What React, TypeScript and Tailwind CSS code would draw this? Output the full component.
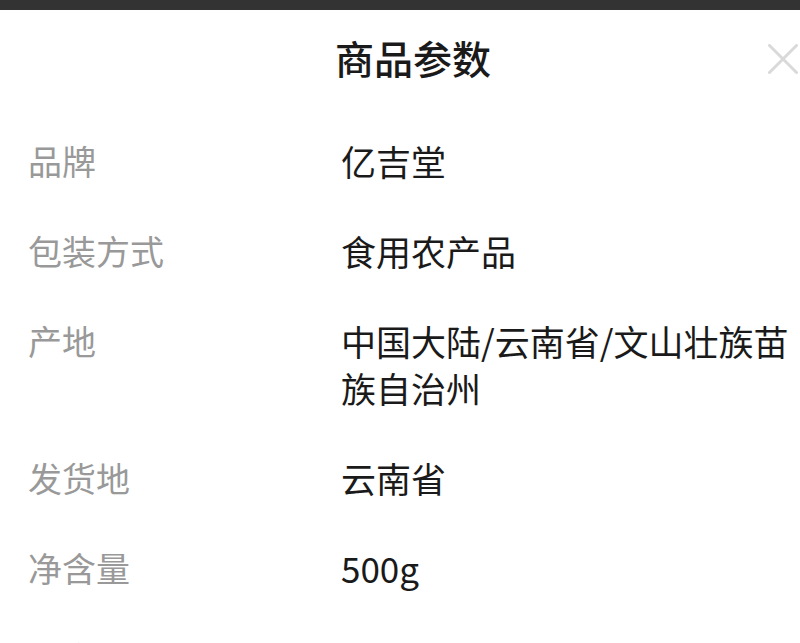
import React from 'react';

const params: { label: string; value: string }[] = [
  { label: '品牌', value: '亿吉堂' },
  { label: '包装方式', value: '食用农产品' },
  { label: '产地', value: '中国大陆/云南省/文山壮族苗族自治州' },
  { label: '发货地', value: '云南省' },
  { label: '净含量', value: '500g' },
  { label: '生产日期', value: '2023-01-01' },
];

export default function App() {
  return (
    <div
      className="w-[800px] h-[643px] overflow-hidden bg-white"
      style={{ fontFamily: '"Noto Sans CJK SC", "Noto Sans", sans-serif' }}
    >
      <div className="h-[10px] bg-[#333333]" />
      <header className="relative h-[100px] flex items-center justify-center pl-[26px] pb-[6px]">
        <h1 className="text-[39px] leading-[47px] font-medium text-[#1a1a1a]">商品参数</h1>
        <button className="absolute right-[2px] top-[34px] w-[30px] h-[30px] text-[#d9d9d9]">
          <svg viewBox="0 0 30 30" className="w-full h-full" fill="none" stroke="currentColor" strokeWidth={3} strokeLinecap="round">
            <path d="M1.5 1.5L28.5 28.5M28.5 1.5L1.5 28.5" />
          </svg>
        </button>
      </header>
      <div className="flex flex-col gap-[43px] pt-[27px] pl-[28px] pr-[6px]">
        {params.map(p => (
          <div key={p.label} className="flex leading-[47px]">
            <div className="w-[313px] shrink-0 text-[34px] text-[#999999]">{p.label}</div>
            <div className="flex-1 text-[35px] text-[#1a1a1a]">{p.value}</div>
          </div>
        ))}
      </div>
    </div>
  );
}
